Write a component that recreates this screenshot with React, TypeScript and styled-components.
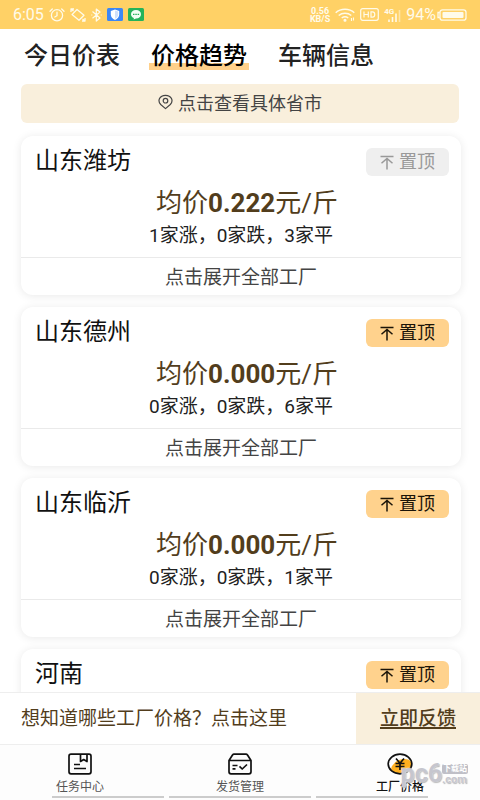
import React from 'react';
import styled, { createGlobalStyle } from 'styled-components';

const GlobalStyle = createGlobalStyle`
  * { box-sizing: border-box; }
  body {
    margin: 0;
    background: #fff;
    color: #111;
    font-family: Roboto, "Noto Sans CJK SC", sans-serif;
  }
  button { font-family: inherit; border: 0; padding: 0; background: none; color: inherit; cursor: pointer; }
`;

const Screen = styled.div`
  display: flex;
  flex-direction: column;
  height: 100vh;
  overflow: hidden;
`;

const StatusBar = styled.header`
  display: flex;
  align-items: center;
  justify-content: space-between;
  flex: none;
  height: 29px;
  padding: 0 13px;
  background: #ffd166;
  color: #fffbea;
`;

const StatusGroup = styled.div<{ $gap: number }>`
  display: flex;
  align-items: center;
  gap: ${(p) => p.$gap}px;
  svg { display: block; }
`;

const StatusText = styled.span`
  font-size: 16px;
  line-height: 20px;
`;

const Speed = styled.span`
  font-size: 9px;
  font-weight: 700;
  line-height: 8px;
  text-align: center;
`;

const Tabs = styled.nav`
  display: flex;
  flex: none;
  gap: 27px;
  padding: 12px 22px 13px;
`;

const Tab = styled.button<{ $active?: boolean }>`
  padding: 0 2px;
  font-size: 24px;
  font-weight: 500;
  line-height: 30px;
  color: ${(p) => (p.$active ? '#000' : '#222')};
  background: ${(p) => (p.$active ? 'linear-gradient(#ffd08a, #ffd08a) 0 22px / 100% 7px no-repeat' : 'none')};
`;

const RegionButton = styled.button`
  display: flex;
  flex: none;
  align-items: center;
  justify-content: center;
  gap: 5px;
  height: 39px;
  margin: 0 21px;
  padding-bottom: 4px;
  border-radius: 6px;
  background: #f9efdc;
  color: #444;
  font-size: 18px;
`;

const List = styled.main`
  display: flex;
  flex: 1;
  flex-direction: column;
  gap: 12px;
  min-height: 0;
  padding: 13px 19px 13px 21px;
  overflow-y: auto;
  scrollbar-width: none;
`;

const Card = styled.article`
  flex: none;
  min-height: 159px;
  border-radius: 12px;
  background: #fff;
  box-shadow: 0 1px 10px rgba(0, 0, 0, 0.09);
`;

const CardHead = styled.div`
  display: flex;
  align-items: flex-start;
  justify-content: space-between;
  height: 49px;
  padding: 12px 12px 0 14px;
`;

const Region = styled.h2`
  margin: 0;
  font-size: 24px;
  font-weight: 400;
  line-height: 26px;
  color: #111;
`;

const PinButton = styled.button`
  display: flex;
  align-items: center;
  justify-content: center;
  gap: 5px;
  width: 83px;
  height: 28px;
  border-radius: 6px;
  background: #ffd28d;
  color: #1b1408;
  font-size: 18px;
  line-height: 24px;
  &:disabled { background: #efefef; color: #999; cursor: default; }
`;

const Average = styled.p`
  margin: 0;
  padding-left: 12px;
  font-size: 26px;
  line-height: 36px;
  text-align: center;
  color: #523d1c;
`;

const Trend = styled.p`
  margin: 0;
  padding-bottom: 6px;
  font-size: 19px;
  line-height: 30px;
  text-align: center;
  color: #222;
`;

const Expand = styled.button`
  display: block;
  width: 100%;
  height: 38px;
  padding-bottom: 3px;
  border-top: 1px solid #eaeaea;
  font-size: 19px;
  color: #444;
`;

const Feedback = styled.section`
  display: flex;
  flex: none;
  align-items: stretch;
  height: 53px;
  border-top: 1px solid #eee;
  border-bottom: 1px solid #eee;
  background: #fff;
  color: #523d1c;
`;

const Question = styled.p`
  flex: 1;
  margin: 0;
  padding-left: 21px;
  font-size: 19px;
  line-height: 52px;
  white-space: nowrap;
`;

const FeedbackLink = styled.a`
  flex: none;
  width: 124px;
  background: #f9efdc;
  color: #523d1c;
  font-size: 19px;
  font-weight: 500;
  line-height: 52px;
  text-align: center;
  text-decoration-thickness: 2px;
  text-underline-offset: 2px;
`;

const BottomBar = styled.footer`
  position: relative;
  flex: none;
  height: 55px;
  background: #fdfdfd;
`;

const NavGrid = styled.nav`
  display: grid;
  grid-template-columns: repeat(3, 1fr);
  height: 51px;
`;

const NavItem = styled.button<{ $active?: boolean }>`
  display: flex;
  flex-direction: column;
  align-items: center;
  gap: 4px;
  padding-top: 8px;
  font-size: 12px;
  font-weight: ${(p) => (p.$active ? 500 : 400)};
  line-height: 16px;
  color: ${(p) => (p.$active ? '#111' : '#555')};
`;

const Tracks = styled.div`
  display: flex;
  gap: 5px;
  padding: 0 52px;
`;

const Track = styled.div<{ $grow: number }>`
  flex: ${(p) => p.$grow};
  height: 2px;
  background: #ccc;
`;

const Watermark = styled.div`
  position: absolute;
  right: 12px;
  bottom: 14px;
  display: flex;
  align-items: flex-end;
  color: #c6c6ce;
  font-weight: 700;
  pointer-events: none;
  text-shadow: 0 0 2px #fff, 1px 1px 1px #aaa;
`;

const MarkName = styled.span`
  font-size: 25px;
  line-height: 24px;
`;

const MarkSide = styled.span`
  display: flex;
  flex-direction: column;
  font-size: 11px;
  line-height: 12px;
`;

const MarkBadge = styled.span`
  padding: 0 1px;
  border-radius: 2px;
  background: #bfbfc7;
  color: #fff;
  font-size: 8px;
  line-height: 10px;
  text-align: center;
  text-shadow: none;
`;

const AlarmIcon = () => (
  <svg width="16" height="14" viewBox="0 0 16 14" fill="none" stroke="currentColor" strokeWidth="1.3" strokeLinecap="round">
    <circle cx="8" cy="7.3" r="5.6" />
    <path d="M8 4.2v3.5L5.8 9M1 3.2 3.3 1M15 3.2 12.7 1" />
  </svg>
);

const RotateIcon = () => (
  <svg width="16" height="14" viewBox="0 0 16 14" fill="none" stroke="currentColor" strokeWidth="1.3" strokeLinejoin="round">
    <path d="M7 1.5 14 7.2 9 12.300 2 6.600ZM1 4V1h3M1 1l2.500 2M15 10v3h-3M15 13l-2.500-2" />
  </svg>
);

const BluetoothIcon = () => (
  <svg width="11" height="14" viewBox="0 0 11 14" fill="none" stroke="currentColor" strokeWidth="1.2" strokeLinejoin="round">
    <path d="M1.5 3.5 9 10 5.3 13V1L9 4 1.5 10.3M.3 7h1M9.7 7h1" />
  </svg>
);

const ShieldIcon = () => (
  <svg width="16" height="13" viewBox="0 0 16 13">
    <rect width="16" height="13" rx="1.5" fill="#3c87f5" />
    <path d="M8 1.5 12.2 3v3.4C12.2 9 10.5 10.8 8 12 5.5 10.8 3.8 9 3.8 6.4V3Z" fill="#fff" />
    <path d="M8 2.5v8.3c2-1 3.2-2.5 3.2-4.6V3.6Z" fill="#cfe0fb" />
  </svg>
);

const ChatIcon = () => (
  <svg width="16" height="13" viewBox="0 0 16 13">
    <rect width="16" height="13" rx="1.5" fill="#25b35a" />
    <path d="M8 2c3 0 5 1.8 5 4.2s-2 4.2-5 4.2l-2.4 1 .3-1.4C4.100 9.300 3 8 3 6.200 3 3.800 5 2 8 2Z" fill="#f2fff5" />
    <path d="M5 5.700h1.500v1.300H5zM7.300 5.700h1.500v1.300H7.300zM9.600 5.700h1.500v1.300H9.600z" fill="#25b35a" />
  </svg>
);

const WifiIcon = () => (
  <svg width="20" height="14" viewBox="0 0 20 14" fill="none" stroke="currentColor" strokeWidth="1.5">
    <path d="M.7 4.800C5.800.2 14.200.2 19.300 4.800M3.700 7.500c3.600-3 9-3 12.600 0M6.700 10c2-1.500 4.600-1.500 6.600 0" />
    <circle cx="10" cy="12.300" r=".8" fill="currentColor" />
    <path d="M16.500 10v3M18.500 9.500v3" strokeWidth="1.100" />
  </svg>
);

const HdIcon = () => (
  <svg width="19" height="13" viewBox="0 0 19 13" fill="none" stroke="currentColor" strokeWidth="1.2">
    <rect x=".7" y=".7" width="17.600" height="11.600" rx="2" />
    <path d="M4 3.500v6M8.300 3.500v6M4 6.500h4.300M11 3.800v5.400h1.500c3 0 3-5.400 0-5.400Z" />
  </svg>
);

const SignalRow = styled.span`
  display: flex;
  align-items: flex-end;
  height: 14px;
`;

const Network = styled.span`
  align-self: flex-start;
  margin-right: -6px;
  font-size: 8px;
  font-weight: 700;
  line-height: 7px;
`;

const Signal = () => (
  <SignalRow>
    <Network>4G</Network>
    <svg width="13" height="13" viewBox="0 0 13 13" stroke="currentColor" strokeWidth="1.600">
      <path d="M1 10.500V13M4.500 8v5M8 4.500V13" />
      <path d="M11.500 1v12" opacity=".5" />
    </svg>
  </SignalRow>
);

const BatteryIcon = () => (
  <svg width="30" height="12" viewBox="0 0 30 12" fill="none" stroke="currentColor" strokeWidth="1.300">
    <rect x="3" y=".8" width="26" height="10.400" rx="2.500" />
    <path d="M2.800 3.500H1v5h1.800" />
    <rect x="5.500" y="3" width="21" height="6" rx="1" fill="currentColor" stroke="none" />
  </svg>
);

const LocationIcon = () => (
  <svg width="15" height="16" viewBox="0 0 15 16" fill="none" stroke="currentColor" strokeWidth="1.200" strokeLinejoin="round">
    <path d="M7.500 14.600 2.700 10.500C-.8 7 1.500 1.300 7.500 1.300s8.300 5.700 4.800 9.200Z" />
    <circle cx="7.500" cy="6.700" r="2.300" />
  </svg>
);

const TopIcon = () => (
  <svg width="14" height="15" viewBox="0 0 14 15" fill="none" stroke="currentColor" strokeWidth="1.500">
    <path d="M.5 1.500h13M7 3.500v11M1.500 8.200 7 3.500l5.500 4.700" />
  </svg>
);

const TaskIcon = () => (
  <svg width="24" height="22" viewBox="0 0 24 22" fill="none" stroke="#111" strokeWidth="1.700" strokeLinejoin="round">
    <rect x="1" y="1.200" width="22" height="19.600" rx="2" />
    <path d="M12.500 1.500v7l3.200-2 3.300 2v-7M6 11.500h6M6 15.500h12" />
  </svg>
);

const ShipIcon = () => (
  <svg width="24" height="22" viewBox="0 0 24 22" fill="none" stroke="#111" strokeWidth="1.700" strokeLinejoin="round">
    <path d="M1 7.500v11.300c0 1.300.7 2 2 2h18c1.300 0 2-.7 2-2V7.500L19.500 2c-.4-.5-.8-.8-1.500-.8H6c-.7 0-1.100.3-1.500.8ZM1 7.500h22" />
    <path d="M4.500 12.500h5M4.500 15.800h3M11.500 13.300l2.700 2.700 4.800-4.500" />
  </svg>
);

const PriceIcon = () => (
  <svg width="26" height="22" viewBox="0 0 26 22" fill="none" stroke="#111" strokeWidth="1.700">
    <path d="M8 9.500c4-4.500 14.500-5 16.500 0 2 4.700-3.500 10.200-10 10.700C8 20.500 3.800 18 4.300 15c.3-2.300 2-3.400 3.700-5.500Z" fill="#ffb020" stroke="none" />
    <ellipse cx="13" cy="11" rx="11.800" ry="9.800" />
    <path d="m9 5.500 4 4.700 4-4.700M13 10.200V17M8.500 10.500h9M8.500 13.500h9" />
  </svg>
);

const tabs = ['今日价表', '价格趋势', '车辆信息'];

type RegionPrice = {
  name: string;
  pinned?: boolean;
  summary?: { price: string; up: number; down: number; flat: number };
};

const regions: RegionPrice[] = [
  { name: '山东潍坊', pinned: true, summary: { price: '0.222', up: 1, down: 0, flat: 3 } },
  { name: '山东德州', summary: { price: '0.000', up: 0, down: 0, flat: 6 } },
  { name: '山东临沂', summary: { price: '0.000', up: 0, down: 0, flat: 1 } },
  { name: '河南' },
];

export default function App() {
  return (
    <Screen>
      <GlobalStyle />
      <StatusBar>
        <StatusGroup $gap={5}>
          <StatusText>6:05</StatusText>
          <AlarmIcon />
          <RotateIcon />
          <BluetoothIcon />
          <ShieldIcon />
          <ChatIcon />
        </StatusGroup>
        <StatusGroup $gap={5}>
          <Speed>0.56<br />KB/S</Speed>
          <WifiIcon />
          <HdIcon />
          <Signal />
          <StatusGroup $gap={1}>
            <StatusText>94%</StatusText>
            <BatteryIcon />
          </StatusGroup>
        </StatusGroup>
      </StatusBar>

      <Tabs>
        {tabs.map((tab, i) => (
          <Tab key={tab} $active={i === 1}>{tab}</Tab>
        ))}
      </Tabs>

      <RegionButton>
        <LocationIcon />
        点击查看具体省市
      </RegionButton>

      <List>
        {regions.map(({ name, pinned, summary }) => (
          <Card key={name}>
            <CardHead>
              <Region>{name}</Region>
              <PinButton disabled={pinned}>
                <TopIcon />
                置顶
              </PinButton>
            </CardHead>
            {summary && (
              <>
                <Average>均价<b>{summary.price}</b>元/斤</Average>
                <Trend>{`${summary.up}家涨，${summary.down}家跌，${summary.flat}家平`}</Trend>
                <Expand>点击展开全部工厂</Expand>
              </>
            )}
          </Card>
        ))}
      </List>

      <Feedback>
        <Question>想知道哪些工厂价格？点击这里</Question>
        <FeedbackLink href="#feedback">立即反馈</FeedbackLink>
      </Feedback>

      <BottomBar>
        <NavGrid>
          <NavItem><TaskIcon />任务中心</NavItem>
          <NavItem><ShipIcon />发货管理</NavItem>
          <NavItem $active><PriceIcon />工厂价格</NavItem>
        </NavGrid>
        <Tracks>
          <Track $grow={112} />
          <Track $grow={142} />
          <Track $grow={112} />
        </Tracks>
        <Watermark>
          <MarkName>pc6</MarkName>
          <MarkSide>
            <MarkBadge>下载站</MarkBadge>
            .com
          </MarkSide>
        </Watermark>
      </BottomBar>
    </Screen>
  );
}
